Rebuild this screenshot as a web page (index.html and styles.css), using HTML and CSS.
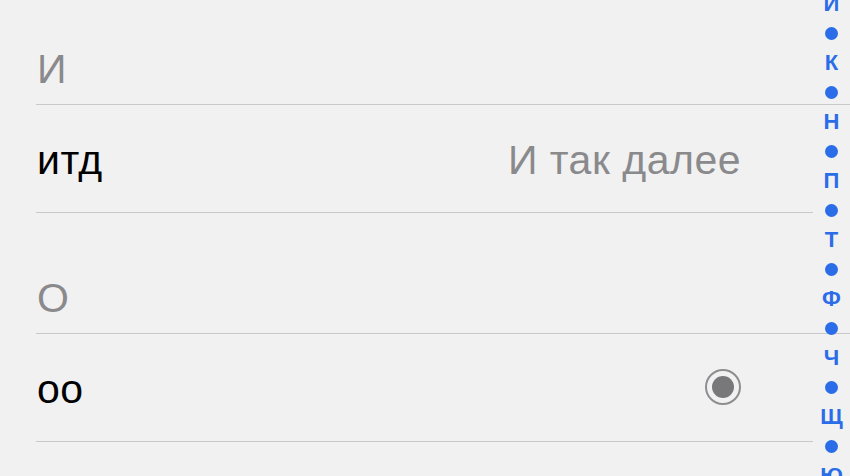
FILE: index.html
```html
<!DOCTYPE html>
<html lang="ru">
<head>
<meta charset="utf-8">
<title>Список</title>
<link rel="stylesheet" href="styles.css">
</head>
<body>
<div class="screen">
  <div class="list">
    <div class="header"><span class="header-title">И</span></div>
    <div class="row">
      <span class="row-title">итд</span>
      <span class="row-detail">И так далее</span>
    </div>
    <div class="header"><span class="header-title">О</span></div>
    <div class="row">
      <span class="row-title">оо</span>
      <span class="radio"><span class="radio-dot"></span></span>
    </div>
  </div>
  <div class="index">
    <span class="index-letter">И</span>
    <span class="index-dot"></span>
    <span class="index-letter">К</span>
    <span class="index-dot"></span>
    <span class="index-letter">Н</span>
    <span class="index-dot"></span>
    <span class="index-letter">П</span>
    <span class="index-dot"></span>
    <span class="index-letter">Т</span>
    <span class="index-dot"></span>
    <span class="index-letter">Ф</span>
    <span class="index-dot"></span>
    <span class="index-letter">Ч</span>
    <span class="index-dot"></span>
    <span class="index-letter">Щ</span>
    <span class="index-dot"></span>
    <span class="index-letter">Ю</span>
  </div>
</div>
</body>
</html>
```
FILE: styles.css
```css
html, body {
  margin: 0;
  padding: 0;
  background: #f1f1f1;
}
body {
  font-family: "Liberation Sans", Arial, sans-serif;
}
.screen {
  position: relative;
  width: 850px;
  height: 476px;
  overflow: hidden;
}
.list {
  display: flex;
  flex-direction: column;
  margin-top: -16px;
}
.header {
  margin-left: 36px;
  border-bottom: 1px solid #c8c8ca;
  display: flex;
  align-items: flex-end;
  padding-bottom: 15px;
  box-sizing: border-box;
  height: 121px;
}
.header-title {
  font-size: 41px;
  line-height: 40px;
  letter-spacing: 0.5px;
  color: #8a8a8d;
  padding-left: 1px;
}
.row {
  height: 108px;
  box-sizing: border-box;
  margin-left: 36px;
  margin-right: 37px;
  border-bottom: 1px solid #c8c8ca;
  display: flex;
  align-items: center;
  justify-content: space-between;
  padding-right: 72px;
  padding-top: 3px;
}
.row-title {
  font-size: 41px;
  line-height: 40px;
  letter-spacing: 0.5px;
  color: #000;
  padding-left: 1px;
}
.row-detail {
  font-size: 41px;
  line-height: 40px;
  letter-spacing: 0.5px;
  color: #8a8a8d;
}
.radio {
  width: 36px;
  height: 36px;
  box-sizing: border-box;
  border: 2px solid #8e8e90;
  border-radius: 50%;
  display: flex;
  align-items: center;
  justify-content: center;
  margin-top: -5px;
}
.radio-dot {
  width: 22px;
  height: 22px;
  border-radius: 50%;
  background: #78787b;
}
.index {
  position: absolute;
  top: -11px;
  left: 813px;
  width: 37px;
  display: flex;
  flex-direction: column;
  align-items: center;
}
.index-letter {
  height: 29.5px;
  display: flex;
  align-items: center;
  justify-content: center;
  font-size: 22px;
  font-weight: 700;
  color: #2b6de8;
  line-height: 1;
}
.index-dot {
  height: 29.5px;
  display: flex;
  align-items: center;
  justify-content: center;
}
.index-dot::before {
  content: "";
  width: 13px;
  height: 13px;
  border-radius: 50%;
  background: #2b6de8;
}
```
